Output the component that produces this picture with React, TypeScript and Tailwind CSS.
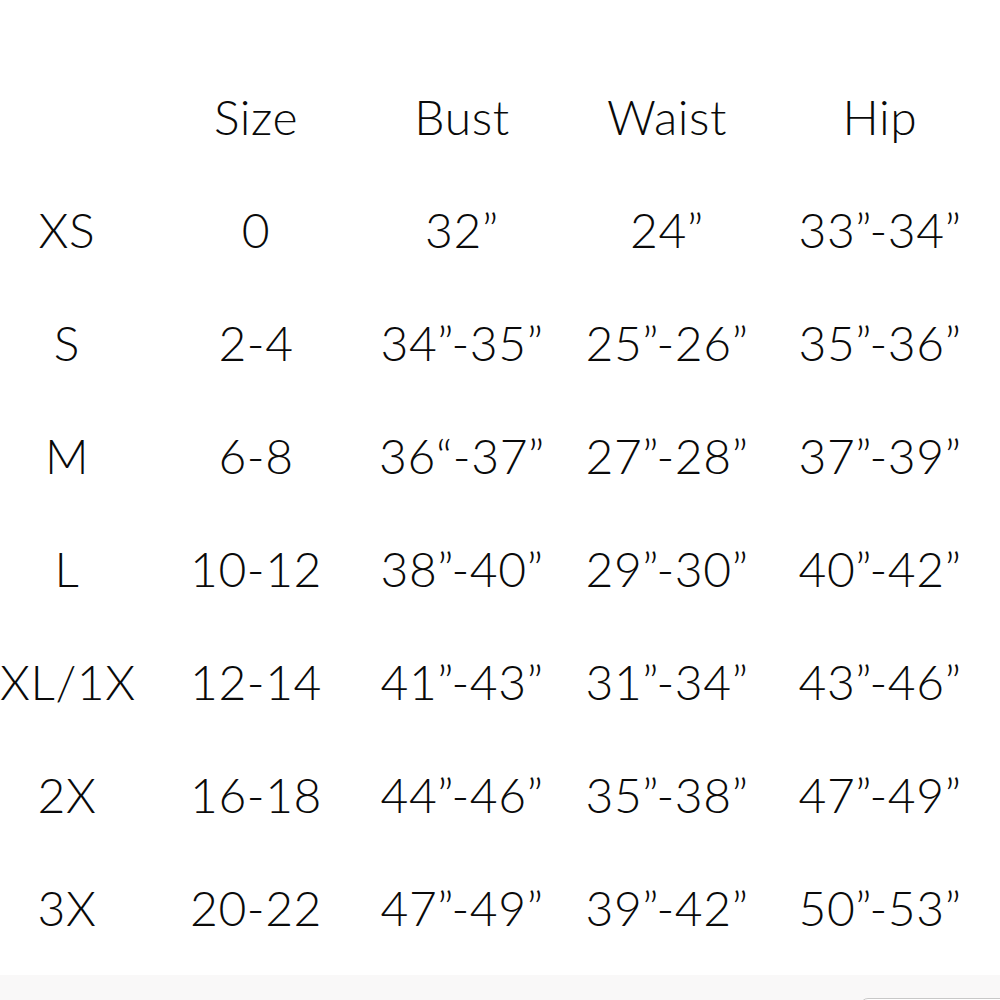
import React from "react";

const rows: string[][] = [
  ["", "Size", "Bust", "Waist", "Hip"],
  ["XS", "0", "32\u201d", "24\u201d", "33\u201d-34\u201d"],
  ["S", "2-4", "34\u201d-35\u201d", "25\u201d-26\u201d", "35\u201d-36\u201d"],
  ["M", "6-8", "36\u201c-37\u201d", "27\u201d-28\u201d", "37\u201d-39\u201d"],
  ["L", "10-12", "38\u201d-40\u201d", "29\u201d-30\u201d", "40\u201d-42\u201d"],
  ["XL/1X", "12-14", "41\u201d-43\u201d", "31\u201d-34\u201d", "43\u201d-46\u201d"],
  ["2X", "16-18", "44\u201d-46\u201d", "35\u201d-38\u201d", "47\u201d-49\u201d"],
  ["3X", "20-22", "47\u201d-49\u201d", "39\u201d-42\u201d", "50\u201d-53\u201d"],
];

export default function App() {
  return (
    <div className="w-[1000px] h-[1000px] bg-white flex flex-col overflow-hidden text-[#0a0a0a]" style={{ fontFamily: "Lato, 'Open Sans', sans-serif" }}>
      <div className="pt-[60px] flex-1">
        {rows.map((r, i) => (
          <div key={i} className="grid grid-cols-[134px_244px_168px_242px_184px] h-[113px] items-center">
            {r.map((c, j) => (
              <div key={j} className="text-center text-[48px] font-light tracking-[0.6px] leading-none whitespace-nowrap">
                {c}
              </div>
            ))}
          </div>
        ))}
      </div>
      <div className="h-[25px] bg-[#f9f8f8] relative">
        <div className="absolute left-[860px] top-[23px] w-[160px] h-[20px] rounded-[8px] border border-[#c8c8c8] bg-white" />
      </div>
    </div>
  );
}
